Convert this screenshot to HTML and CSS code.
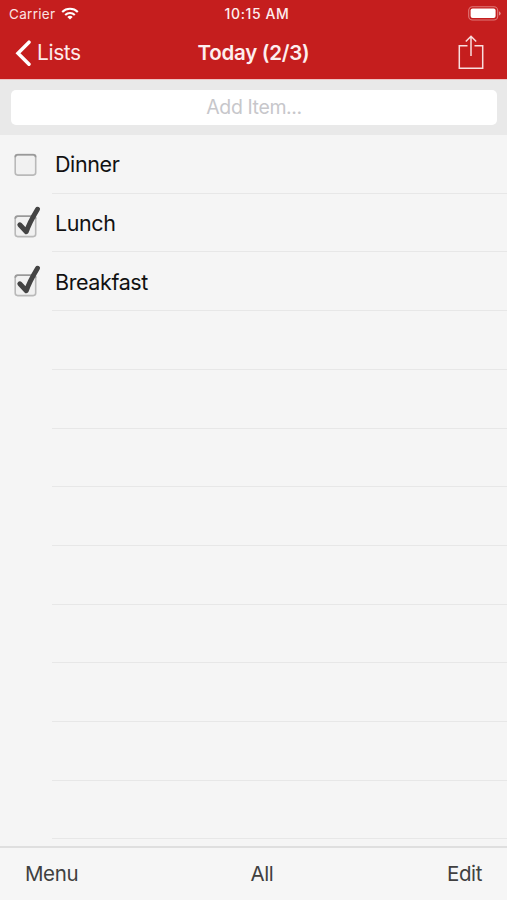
FILE: index.html
```html
<!DOCTYPE html>
<html lang="en">
<head>
<meta charset="utf-8">
<title>Today</title>
<link rel="stylesheet" href="styles.css">
</head>
<body>
<main class="app">
  <header class="header">
    <div class="status">
      <div class="carrier"><span>Carrier</span>
        <svg class="wifi" width="18" height="13" viewBox="0 0 18 13" fill="none" stroke="#fff" stroke-width="2.1"><path d="M1.2 4.9C5.5.7 12.500.7 16.800 4.900M4.200 7.900C6.900 5.300 11.100 5.300 13.800 7.900"/><path d="M6.300 9.900Q9 7.800 11.700 9.900L9 12.600Z" fill="#fff" stroke="none"/></svg>
      </div>
      <span class="time">10:15 AM</span>
      <svg class="battery" width="33" height="15" viewBox="0 0 33 15"><rect x=".7" y=".7" width="29" height="13.300" rx="3.800" fill="none" stroke="#e07878" stroke-width="1.100"/><rect x="2.600" y="2.600" width="25" height="9.500" rx="2" fill="#fff"/><path d="M31 5.200q1.700.7 1.700 2.200T31 9.600z" fill="#e58d8d"/></svg>
    </div>
    <nav class="nav">
      <a class="back"><svg width="17" height="28" viewBox="0 0 17 28" fill="none" stroke="#fff" stroke-width="3.500" stroke-linecap="round" stroke-linejoin="miter"><path d="M15 3.200L4 14.200L15 25.200"/></svg><span>Lists</span></a>
      <h1 class="title">Today (2/3)</h1>
      <svg class="share" width="26" height="35" viewBox="0 0 26 35" fill="none" stroke="#f9dede" stroke-width="1.500"><path d="M9.500 10.700H1.300V33.300H24.700V10.700H16.500M13 21V1.500M7.800 6.500L13 1.300L18.200 6.500"/></svg>
    </nav>
  </header>
  <div class="add"><input class="field" type="text" placeholder="Add Item..."></div>
  <ul class="list">
    <li class="row"><svg class="check" width="32" height="38" viewBox="0 0 32 38"><use href="#box"/></svg><div class="cell"><span class="dinner">Dinner</span></div></li>
    <li class="row"><svg class="check" width="32" height="38" viewBox="0 0 32 38"><use href="#box" y="2.500"/><use href="#tick"/></svg><div class="cell"><span class="lunch">Lunch</span></div></li>
    <li class="row"><svg class="check" width="32" height="38" viewBox="0 0 32 38"><use href="#box" y="2.500"/><use href="#tick"/></svg><div class="cell"><span class="breakfast">Breakfast</span></div></li>
    <li class="row empty"></li><li class="row empty"></li><li class="row empty"></li>
    <li class="row empty"></li><li class="row empty"></li><li class="row empty"></li>
    <li class="row empty"></li><li class="row empty"></li><li class="row empty"></li>
  </ul>
  <footer class="toolbar"><span class="menu">Menu</span><span class="all">All</span><span class="edit">Edit</span></footer>
</main>
<svg class="defs" width="0" height="0">
  <defs>
    <g id="box"><rect x="4.200" y="9.600" width="20.500" height="20.500" rx="2.500" fill="#f1f1f1" stroke="#b9b9b9" stroke-width="1.600"/><path d="M4.300 12.200Q4.300 9.700 6.700 9.700H22.200Q24.600 9.700 24.600 12.200" fill="none" stroke="#999" stroke-width="1.600"/></g>
    <path id="tick" d="M8.800 20.800L15.300 27.700Q18.500 18.500 26.500 5.200" fill="none" stroke="#444" stroke-width="4.900" stroke-linecap="round" stroke-linejoin="round"/>
  </defs>
</svg>
</body>
</html>
```
FILE: styles.css
```css
* { box-sizing: border-box; }
body { margin: 0; font-family: Inter, "Liberation Sans", sans-serif; background: #f5f5f5; }
.app { width: 507px; height: 900px; display: flex; flex-direction: column; overflow: hidden; }
.header { flex: none; height: 79px; background: #c51e1e; color: #fff; }
.status { height: 27px; display: grid; grid-template-columns: 1fr auto 1fr; align-items: center; padding: 0 6px 0 9px; font-size: 13.5px; }
.carrier { display: flex; align-items: center; gap: 6px; color: #fbe3e3; letter-spacing: .3px; }
.wifi { display: block; }
.time { margin: 0 -2px 0 2px; font-weight: 500; font-size: 14px; letter-spacing: .6px; color: #fdeeee; }
.battery { justify-self: end; display: block; }
.nav { height: 52px; display: grid; grid-template-columns: 1fr auto 1fr; align-items: center; padding: 0 23px 1px 14px; }
.back { display: flex; align-items: center; gap: 6px; font-size: 21px; letter-spacing: -.4px; color: #fdeaea; }
.title { margin: 0 -4.5px 0 4.5px; font-size: 20.5px; font-weight: 600; letter-spacing: -.25px; color: #fdeeee; }
.share { justify-self: end; }
.add { flex: none; height: 56px; padding: 10px 10px 10px 11px; background: #e9e9e9; border-top: 1px solid #edc4c4; }
.field { display: block; width: 100%; height: 35px; padding: 0 0 2px; border: 0; border-radius: 5px; background: #fff; text-align: center; font: 19.5px Inter, sans-serif; letter-spacing: -.4px; }
.field::placeholder { color: #c7c7cb; opacity: 1; }
.list { flex: 1; min-height: 0; margin: 0; padding: 0; list-style: none; overflow: hidden; }
.row { height: 58.67px; display: flex; align-items: center; }
.check { flex: none; width: 32px; margin: 0 9px 0 11px; }
.cell { flex: 1; height: 100%; display: flex; align-items: center; padding: 1px 0 0 3px; border-bottom: 1px solid #e7e7e7; font-size: 21.5px; letter-spacing: -.4px; color: #111; }
.empty::after { content: ""; flex: 1; height: 100%; margin-left: 52px; border-bottom: 1px solid #e7e7e7; }
.toolbar { flex: none; height: 54px; border-top: 2px solid #dfdfdf; background: #f6f6f6; display: grid; grid-template-columns: 1fr auto 1fr; align-items: center; padding: 0 25px 2px; font-size: 20.5px; letter-spacing: -.4px; color: #404040; }
.all { margin: 0 -8.5px 0 8.5px; }
.edit { justify-self: end; }
.defs { position: absolute; }
```
